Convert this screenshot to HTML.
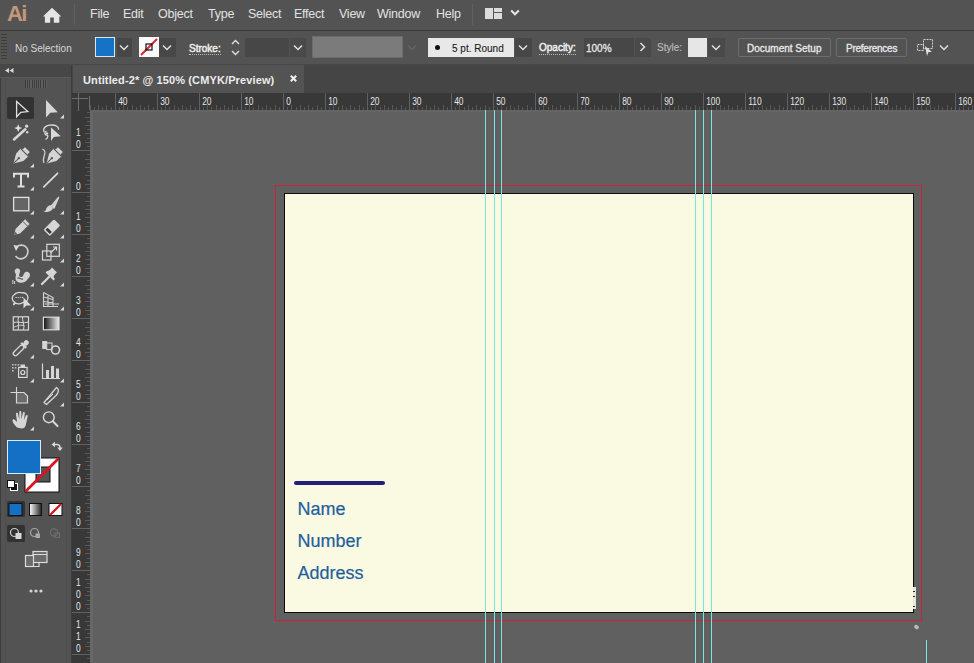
<!DOCTYPE html>
<html><head><meta charset="utf-8">
<style>
*{margin:0;padding:0;box-sizing:border-box}
html,body{width:974px;height:663px;overflow:hidden;background:#535353;font-family:"Liberation Sans",sans-serif}
.a{position:absolute}
.mt{position:absolute;top:7px;color:#e2e2e2;font-size:12.5px;letter-spacing:-0.25px;white-space:nowrap}
.lbl{position:absolute;color:#dcdcdc;font-size:10px;white-space:nowrap;-webkit-text-stroke:0.3px currentColor}
.chev{position:absolute;width:16px;height:18px}
</style></head><body>
<!-- menu bar -->
<div class="a" style="left:0;top:0;width:974px;height:30px;background:#535353"></div>
<div class="a" style="left:0;top:30px;width:974px;height:1px;background:#383838"></div>
<div class="a" style="left:7px;top:1px;font-size:22px;line-height:26px;color:#c29878;font-weight:bold;letter-spacing:-1.6px">Ai</div>
<svg class="a" style="left:42px;top:7px" width="20" height="16" viewBox="0 0 20 16"><path d="M10 0.8 L19.3 9.5 L17.3 9.5 L17.3 15.8 L11.8 15.8 L11.8 10.5 L8.2 10.5 L8.2 15.8 L2.9 15.8 L2.9 9.5 L0.9 9.5 Z" fill="#e6e6e6"/></svg>
<div class="a" style="left:74px;top:4px;width:1px;height:21px;background:#606060"></div>
<div class="mt" style="left:90px">File</div>
<div class="mt" style="left:123px">Edit</div>
<div class="mt" style="left:158px">Object</div>
<div class="mt" style="left:208px">Type</div>
<div class="mt" style="left:248px">Select</div>
<div class="mt" style="left:294px">Effect</div>
<div class="mt" style="left:339px">View</div>
<div class="mt" style="left:377px">Window</div>
<div class="mt" style="left:436px">Help</div>
<div class="a" style="left:472px;top:4px;width:1px;height:21px;background:#606060"></div>
<svg class="a" style="left:485px;top:8px" width="17" height="11" viewBox="0 0 17 11"><rect x="0" y="0" width="8" height="11" fill="#dcdcdc"/><rect x="9" y="0" width="8" height="4" fill="#dcdcdc"/><rect x="9" y="5" width="8" height="6" fill="#dcdcdc"/></svg>
<svg class="a" style="left:510px;top:9px" width="10" height="7" viewBox="0 0 10 7"><path d="M1.2 1.5 L5 5.3 L8.8 1.5" stroke="#e6e6e6" stroke-width="2" fill="none"/></svg>

<!-- control bar -->
<div class="a" style="left:0;top:31px;width:974px;height:33px;background:#535353"></div>
<div class="a" style="left:0;top:64px;width:974px;height:1px;background:#474747"></div>

<!-- control bar content -->
<div class="a" style="left:1px;top:34px;width:6px;height:27px;background-image:repeating-linear-gradient(#3d3d3d 0 1px,transparent 1px 3px)"></div>
<div class="lbl" style="left:15px;top:43px;font-size:10px;color:#d8d8d8;-webkit-text-stroke:0">No Selection</div>
<div class="a" style="left:95px;top:37px;width:20px;height:20px;background:#1572c4;border:1px solid #d8e6f2"></div>
<div class="a" style="left:117px;top:38px;width:15px;height:19px;background:#474747"></div>
<svg class="a" style="left:119px;top:44px" width="10" height="7" viewBox="0 0 10 7"><path d="M1 1.5 L5 5.5 L9 1.5" stroke="#e0e0e0" stroke-width="1.5" fill="none"/></svg>
<svg class="a" style="left:139px;top:37px" width="20" height="20" viewBox="0 0 20 20"><rect x="0" y="0" width="20" height="20" fill="#fafafa"/><path d="M2 18 L18 2" stroke="#e0202a" stroke-width="2"/><rect x="7" y="7" width="6" height="6" fill="none" stroke="#111" stroke-width="1.2"/></svg>
<div class="a" style="left:159px;top:38px;width:17px;height:19px;background:#474747"></div>
<svg class="a" style="left:162px;top:44px" width="10" height="7" viewBox="0 0 10 7"><path d="M1 1.5 L5 5.5 L9 1.5" stroke="#e0e0e0" stroke-width="1.5" fill="none"/></svg>
<div class="lbl" style="left:189px;top:43px;border-bottom:1px dotted #bbb;line-height:11px;color:#f0f0f0;-webkit-text-stroke:0.45px #f0f0f0">Stroke:</div>
<svg class="a" style="left:230px;top:38px" width="11" height="19" viewBox="0 0 11 19"><path d="M2 6 L5.5 2.5 L9 6 M2 13 L5.5 16.5 L9 13" stroke="#e0e0e0" stroke-width="1.4" fill="none"/></svg>
<div class="a" style="left:245px;top:38px;width:44px;height:19px;background:#474747"></div>
<div class="a" style="left:290px;top:38px;width:16px;height:19px;background:#4a4a4a"></div>
<svg class="a" style="left:293px;top:44px" width="10" height="7" viewBox="0 0 10 7"><path d="M1 1.5 L5 5.5 L9 1.5" stroke="#e0e0e0" stroke-width="1.5" fill="none"/></svg>
<div class="a" style="left:312px;top:36px;width:91px;height:22px;background:#7b7b7b;border:1px solid #6c6c6c"></div>
<svg class="a" style="left:407px;top:44px" width="10" height="7" viewBox="0 0 10 7"><path d="M1 1.5 L5 5.5 L9 1.5" stroke="#656565" stroke-width="1.5" fill="none"/></svg>
<div class="a" style="left:428px;top:38px;width:86px;height:19px;background:#e8e8e8"></div>
<div class="a" style="left:435px;top:45px;width:5px;height:5px;border-radius:50%;background:#111"></div>
<div class="lbl" style="left:452px;top:43px;color:#1a1a1a;font-size:10px;-webkit-text-stroke:0.1px #1a1a1a">5 pt. Round</div>
<div class="a" style="left:515px;top:38px;width:17px;height:19px;background:#474747"></div>
<svg class="a" style="left:518px;top:44px" width="10" height="7" viewBox="0 0 10 7"><path d="M1 1.5 L5 5.5 L9 1.5" stroke="#e0e0e0" stroke-width="1.5" fill="none"/></svg>
<div class="lbl" style="left:539px;top:42px;border-bottom:1px dotted #bbb;line-height:12px;color:#f0f0f0;-webkit-text-stroke:0.45px #f0f0f0">Opacity:</div>
<div class="a" style="left:584px;top:38px;width:50px;height:19px;background:#474747"></div>
<div class="lbl" style="left:586px;top:43px;color:#e6e6e6">100%</div>
<div class="a" style="left:635px;top:38px;width:16px;height:19px;background:#4a4a4a"></div>
<svg class="a" style="left:639px;top:42px" width="7" height="10" viewBox="0 0 7 10"><path d="M1.5 1 L5.5 5 L1.5 9" stroke="#e0e0e0" stroke-width="1.5" fill="none"/></svg>
<div class="lbl" style="left:657px;top:42px;color:#b8b8b8;-webkit-text-stroke:0.2px #b8b8b8">Style:</div>
<div class="a" style="left:688px;top:38px;width:19px;height:19px;background:#e6e6e6"></div>
<div class="a" style="left:708px;top:38px;width:17px;height:19px;background:#4a4a4a"></div>
<svg class="a" style="left:711px;top:44px" width="10" height="7" viewBox="0 0 10 7"><path d="M1 1.5 L5 5.5 L9 1.5" stroke="#e0e0e0" stroke-width="1.5" fill="none"/></svg>
<div class="a" style="left:738px;top:38px;width:93px;height:19px;border:1px solid #6e6e6e;border-radius:2px"></div>
<div class="lbl" style="left:747px;top:43px;color:#eaeaea">Document Setup</div>
<div class="a" style="left:836px;top:38px;width:71px;height:19px;border:1px solid #6e6e6e;border-radius:2px"></div>
<div class="lbl" style="left:846px;top:43px;color:#eaeaea;letter-spacing:-0.25px">Preferences</div>
<svg class="a" style="left:915px;top:37px" width="22" height="20" viewBox="0 0 22 20"><rect x="8.5" y="2.5" width="9" height="9" fill="none" stroke="#d0d0d0" stroke-dasharray="2 1"/><rect x="2.5" y="7.5" width="6" height="6" fill="none" stroke="#d0d0d0" stroke-dasharray="2 1"/><path d="M10 9 L17 15 L13.5 15 L12 19 Z" fill="#e0e0e0"/></svg>
<svg class="a" style="left:939px;top:44px" width="10" height="7" viewBox="0 0 10 7"><path d="M1 1.5 L5 5.5 L9 1.5" stroke="#e0e0e0" stroke-width="1.5" fill="none"/></svg>

<!-- tab bar -->
<div class="a" style="left:72px;top:65px;width:902px;height:28px;background:#454545"></div>
<div class="a" style="left:73px;top:65px;width:231px;height:28px;background:#535353"></div>
<div class="a" style="left:83px;top:73px;color:#ececec;font-size:11px;font-weight:bold;letter-spacing:0.12px;white-space:nowrap;top:74px">Untitled-2* @ 150% (CMYK/Preview)</div>
<svg class="a" style="left:289px;top:74px" width="9" height="9" viewBox="0 0 9 9"><path d="M1.8 1.8 L7.2 7.2 M7.2 1.8 L1.8 7.2" stroke="#f0f0f0" stroke-width="2"/></svg>

<!-- rulers -->
<svg class="a" style="left:72px;top:93px" width="902" height="570" viewBox="72 93 902 570">
<rect x="72" y="93" width="902" height="17" fill="#383838"/>
<rect x="72" y="93" width="18" height="570" fill="#383838"/>
<path d="M115.5 93V110 M157.5 93V110 M199.5 93V110 M241.5 93V110 M283.5 93V110 M325.5 93V110 M367.5 93V110 M409.5 93V110 M451.5 93V110 M493.5 93V110 M535.5 93V110 M577.5 93V110 M619.5 93V110 M661.5 93V110 M703.5 93V110 M745.5 93V110 M787.5 93V110 M829.5 93V110 M871.5 93V110 M913.5 93V110 M955.5 93V110 M997.5 93V110 M72 150.5H90 M72 192.5H90 M72 234.5H90 M72 276.5H90 M72 318.5H90 M72 360.5H90 M72 402.5H90 M72 444.5H90 M72 486.5H90 M72 528.5H90 M72 570.5H90 M72 612.5H90 M72 654.5H90" stroke="#626262" stroke-width="1" fill="none"/>
<path d="M90.5 105V110 M94.5 107V110 M98.5 105V110 M102.5 107V110 M106.5 105V110 M111.5 107V110 M119.5 107V110 M123.5 105V110 M127.5 107V110 M132.5 105V110 M136.5 107V110 M140.5 105V110 M144.5 107V110 M148.5 105V110 M153.5 107V110 M161.5 107V110 M165.5 105V110 M169.5 107V110 M174.5 105V110 M178.5 107V110 M182.5 105V110 M186.5 107V110 M190.5 105V110 M195.5 107V110 M203.5 107V110 M207.5 105V110 M211.5 107V110 M216.5 105V110 M220.5 107V110 M224.5 105V110 M228.5 107V110 M232.5 105V110 M237.5 107V110 M245.5 107V110 M249.5 105V110 M253.5 107V110 M258.5 105V110 M262.5 107V110 M266.5 105V110 M270.5 107V110 M275.5 105V110 M279.5 107V110 M287.5 107V110 M291.5 105V110 M296.5 107V110 M300.5 105V110 M304.5 107V110 M308.5 105V110 M312.5 107V110 M317.5 105V110 M321.5 107V110 M329.5 107V110 M333.5 105V110 M338.5 107V110 M342.5 105V110 M346.5 107V110 M350.5 105V110 M354.5 107V110 M359.5 105V110 M363.5 107V110 M371.5 107V110 M375.5 105V110 M380.5 107V110 M384.5 105V110 M388.5 107V110 M392.5 105V110 M396.5 107V110 M401.5 105V110 M405.5 107V110 M413.5 107V110 M417.5 105V110 M422.5 107V110 M426.5 105V110 M430.5 107V110 M434.5 105V110 M438.5 107V110 M443.5 105V110 M447.5 107V110 M455.5 107V110 M459.5 105V110 M464.5 107V110 M468.5 105V110 M472.5 107V110 M476.5 105V110 M480.5 107V110 M485.5 105V110 M489.5 107V110 M497.5 107V110 M501.5 105V110 M506.5 107V110 M510.5 105V110 M514.5 107V110 M518.5 105V110 M522.5 107V110 M527.5 105V110 M531.5 107V110 M539.5 107V110 M543.5 105V110 M548.5 107V110 M552.5 105V110 M556.5 107V110 M560.5 105V110 M564.5 107V110 M569.5 105V110 M573.5 107V110 M581.5 107V110 M585.5 105V110 M590.5 107V110 M594.5 105V110 M598.5 107V110 M602.5 105V110 M606.5 107V110 M611.5 105V110 M615.5 107V110 M623.5 107V110 M627.5 105V110 M632.5 107V110 M636.5 105V110 M640.5 107V110 M644.5 105V110 M648.5 107V110 M653.5 105V110 M657.5 107V110 M665.5 107V110 M669.5 105V110 M674.5 107V110 M678.5 105V110 M682.5 107V110 M686.5 105V110 M690.5 107V110 M695.5 105V110 M699.5 107V110 M707.5 107V110 M711.5 105V110 M716.5 107V110 M720.5 105V110 M724.5 107V110 M728.5 105V110 M732.5 107V110 M737.5 105V110 M741.5 107V110 M749.5 107V110 M753.5 105V110 M758.5 107V110 M762.5 105V110 M766.5 107V110 M770.5 105V110 M774.5 107V110 M779.5 105V110 M783.5 107V110 M791.5 107V110 M795.5 105V110 M800.5 107V110 M804.5 105V110 M808.5 107V110 M812.5 105V110 M816.5 107V110 M821.5 105V110 M825.5 107V110 M833.5 107V110 M837.5 105V110 M842.5 107V110 M846.5 105V110 M850.5 107V110 M854.5 105V110 M858.5 107V110 M863.5 105V110 M867.5 107V110 M875.5 107V110 M879.5 105V110 M884.5 107V110 M888.5 105V110 M892.5 107V110 M896.5 105V110 M900.5 107V110 M905.5 105V110 M909.5 107V110 M917.5 107V110 M921.5 105V110 M926.5 107V110 M930.5 105V110 M934.5 107V110 M938.5 105V110 M942.5 107V110 M947.5 105V110 M951.5 107V110 M959.5 107V110 M963.5 105V110 M968.5 107V110 M972.5 105V110 M87 112.5H90 M85 117.5H90 M87 121.5H90 M85 125.5H90 M87 129.5H90 M85 133.5H90 M87 138.5H90 M85 142.5H90 M87 146.5H90 M87 154.5H90 M85 159.5H90 M87 163.5H90 M85 167.5H90 M87 171.5H90 M85 175.5H90 M87 180.5H90 M85 184.5H90 M87 188.5H90 M87 196.5H90 M85 201.5H90 M87 205.5H90 M85 209.5H90 M87 213.5H90 M85 217.5H90 M87 222.5H90 M85 226.5H90 M87 230.5H90 M87 238.5H90 M85 243.5H90 M87 247.5H90 M85 251.5H90 M87 255.5H90 M85 259.5H90 M87 264.5H90 M85 268.5H90 M87 272.5H90 M87 280.5H90 M85 285.5H90 M87 289.5H90 M85 293.5H90 M87 297.5H90 M85 301.5H90 M87 306.5H90 M85 310.5H90 M87 314.5H90 M87 322.5H90 M85 327.5H90 M87 331.5H90 M85 335.5H90 M87 339.5H90 M85 343.5H90 M87 348.5H90 M85 352.5H90 M87 356.5H90 M87 364.5H90 M85 369.5H90 M87 373.5H90 M85 377.5H90 M87 381.5H90 M85 385.5H90 M87 390.5H90 M85 394.5H90 M87 398.5H90 M87 406.5H90 M85 411.5H90 M87 415.5H90 M85 419.5H90 M87 423.5H90 M85 427.5H90 M87 432.5H90 M85 436.5H90 M87 440.5H90 M87 448.5H90 M85 453.5H90 M87 457.5H90 M85 461.5H90 M87 465.5H90 M85 469.5H90 M87 474.5H90 M85 478.5H90 M87 482.5H90 M87 490.5H90 M85 495.5H90 M87 499.5H90 M85 503.5H90 M87 507.5H90 M85 511.5H90 M87 516.5H90 M85 520.5H90 M87 524.5H90 M87 532.5H90 M85 537.5H90 M87 541.5H90 M85 545.5H90 M87 549.5H90 M85 553.5H90 M87 558.5H90 M85 562.5H90 M87 566.5H90 M87 574.5H90 M85 579.5H90 M87 583.5H90 M85 587.5H90 M87 591.5H90 M85 595.5H90 M87 600.5H90 M85 604.5H90 M87 608.5H90 M87 616.5H90 M85 621.5H90 M87 625.5H90 M85 629.5H90 M87 633.5H90 M85 637.5H90 M87 642.5H90 M85 646.5H90 M87 650.5H90 M87 658.5H90" stroke="#585858" stroke-width="1" fill="none"/>
<rect x="72" y="93" width="18" height="17" fill="#383838"/><path d="M72 98.5H88 M78.5 93V111 M89.5 96V110" stroke="#6e6e6e" stroke-width="1"/>
<g fill="#e6e6e6" font-family="Liberation Sans" font-size="10.5px"><text transform="translate(118.2 105) scale(0.8 1)">40</text><text transform="translate(160.2 105) scale(0.8 1)">30</text><text transform="translate(202.2 105) scale(0.8 1)">20</text><text transform="translate(244.2 105) scale(0.8 1)">10</text><text transform="translate(286.2 105) scale(0.8 1)">0</text><text transform="translate(328.2 105) scale(0.8 1)">10</text><text transform="translate(370.2 105) scale(0.8 1)">20</text><text transform="translate(412.2 105) scale(0.8 1)">30</text><text transform="translate(454.2 105) scale(0.8 1)">40</text><text transform="translate(496.2 105) scale(0.8 1)">50</text><text transform="translate(538.2 105) scale(0.8 1)">60</text><text transform="translate(580.2 105) scale(0.8 1)">70</text><text transform="translate(622.2 105) scale(0.8 1)">80</text><text transform="translate(664.2 105) scale(0.8 1)">90</text><text transform="translate(706.2 105) scale(0.8 1)">100</text><text transform="translate(748.2 105) scale(0.8 1)">110</text><text transform="translate(790.2 105) scale(0.8 1)">120</text><text transform="translate(832.2 105) scale(0.8 1)">130</text><text transform="translate(874.2 105) scale(0.8 1)">140</text><text transform="translate(916.2 105) scale(0.8 1)">150</text><text transform="translate(958.2 105) scale(0.8 1)">160</text><text transform="translate(1000.2 105) scale(0.8 1)">170</text><text transform="translate(76 135.5) scale(0.8 1)">1</text><text transform="translate(76 147.5) scale(0.8 1)">0</text><text transform="translate(76 189.5) scale(0.8 1)">0</text><text transform="translate(76 219.5) scale(0.8 1)">1</text><text transform="translate(76 231.5) scale(0.8 1)">0</text><text transform="translate(76 261.5) scale(0.8 1)">2</text><text transform="translate(76 273.5) scale(0.8 1)">0</text><text transform="translate(76 303.5) scale(0.8 1)">3</text><text transform="translate(76 315.5) scale(0.8 1)">0</text><text transform="translate(76 345.5) scale(0.8 1)">4</text><text transform="translate(76 357.5) scale(0.8 1)">0</text><text transform="translate(76 387.5) scale(0.8 1)">5</text><text transform="translate(76 399.5) scale(0.8 1)">0</text><text transform="translate(76 429.5) scale(0.8 1)">6</text><text transform="translate(76 441.5) scale(0.8 1)">0</text><text transform="translate(76 471.5) scale(0.8 1)">7</text><text transform="translate(76 483.5) scale(0.8 1)">0</text><text transform="translate(76 513.5) scale(0.8 1)">8</text><text transform="translate(76 525.5) scale(0.8 1)">0</text><text transform="translate(76 555.5) scale(0.8 1)">9</text><text transform="translate(76 567.5) scale(0.8 1)">0</text><text transform="translate(76 585.5) scale(0.8 1)">1</text><text transform="translate(76 597.5) scale(0.8 1)">0</text><text transform="translate(76 609.5) scale(0.8 1)">0</text><text transform="translate(76 627.5) scale(0.8 1)">1</text><text transform="translate(76 639.5) scale(0.8 1)">1</text><text transform="translate(76 651.5) scale(0.8 1)">0</text></g>
</svg>
<div class="a" style="left:90px;top:110px;width:884px;height:553px;background:#606060"></div>
<div class="a" style="left:90px;top:110px;width:3px;height:553px;background:#676767"></div>
<div class="a" style="left:90px;top:110px;width:884px;height:2px;background:#646464"></div>
<!-- left tool panel -->
<div class="a" style="left:0;top:65px;width:72px;height:598px;background:#535353"></div>
<div class="a" style="left:0;top:65px;width:71px;height:12px;background:#474747"></div>
<div class="a" style="left:71px;top:65px;width:1px;height:598px;background:#3b3b3b"></div>
<div class="a" style="left:25px;top:80px;width:22px;height:8px;background-image:repeating-linear-gradient(90deg,#3c3c3c 0 1px,#5e5e5e 1px 2.2px)"></div>
<div class="a" style="left:0;top:77px;width:1px;height:586px;background:#3c3c3c"></div>
<div class="a" style="left:5px;top:78px;width:1px;height:585px;background:#4d4d4d"></div>
<div class="a" style="left:66px;top:78px;width:1px;height:585px;background:#4d4d4d"></div>
<div class="a" style="left:0;top:77px;width:71px;height:1px;background:#5a5a5a"></div>
<svg class="a" style="left:5px;top:68px" width="9" height="5" viewBox="0 0 9 5"><path d="M4 0L0 2.5L4 5Z M8.5 0L4.5 2.5L8.5 5Z" fill="#d8d8d8"/></svg>
<svg class="a" style="left:0;top:0" width="72" height="663" viewBox="0 0 72 663">
<defs>
<linearGradient id="gr1" x1="0" x2="1" y1="0" y2="0"><stop offset="0" stop-color="#111"/><stop offset="1" stop-color="#eee"/></linearGradient>
<linearGradient id="gr2" x1="0" x2="1" y1="0" y2="0"><stop offset="0" stop-color="#fff"/><stop offset="1" stop-color="#222"/></linearGradient>
</defs>
<g fill="#d8d8d8" stroke="none">
<!-- corner triangles col1 -->
<path d="M34 163.5v4h-4z M34 186.5v4h-4z M34 210.5v4h-4z M34 234.5v4h-4z M34 258.5v4h-4z M34 282.5v4h-4z M34 306.5v4h-4z M34 354.5v4h-4z M34 378.5v4h-4z M34 426.5v4h-4z"/>
<!-- col2 -->
<path d="M64 114.5v4h-4z M64 186.5v4h-4z M64 210.5v4h-4z M64 234.5v4h-4z M64 258.5v4h-4z M64 282.5v4h-4z M64 306.5v4h-4z M64 378.5v4h-4z M64 402.5v4h-4z"/>
</g>
<!-- selection tool selected -->
<rect x="7" y="97" width="27" height="22" rx="2.5" fill="#323232"/>
<path d="M16.6 101.5 L16.6 116.8 L20.8 112.3 L27.8 111.6 Z" fill="none" stroke="#dedede" stroke-width="1.3" stroke-linejoin="miter"/>
<!-- direct selection -->
<path d="M46 100 L46 117.5 L50.3 112.8 L57.8 112.2 Z" fill="#d6d6d6"/>
<!-- magic wand -->
<path d="M14 139.5 L25.3 129.3" stroke="#d8d8d8" stroke-width="2.5" stroke-linecap="round"/>
<path d="M18.2 124.2 L19.4 126.9 L22.2 128.1 L19.4 129.3 L18.2 132 L17 129.3 L14.2 128.1 L17 126.9 Z" fill="#dcdcdc"/>
<circle cx="26.6" cy="126.2" r="1.6" fill="#d8d8d8"/><circle cx="27.2" cy="132.3" r="1.2" fill="#d8d8d8"/>
<!-- lasso -->
<path d="M44 132 C42.5 127 47 125 51.5 125 C56 125 59 127 58.6 129.6" fill="none" stroke="#d8d8d8" stroke-width="1.3"/>
<path d="M46.5 131.2 C44 132 44.5 135 46.8 135.2 C48.5 135.2 48 138 45.5 139.5" fill="none" stroke="#d8d8d8" stroke-width="1.3"/>
<circle cx="47" cy="133.4" r="1.2" fill="#d8d8d8"/>
<path d="M51 127.6 L51 141 L53.8 137 L60.8 136.3 Z" fill="#dadada"/>
<!-- pen -->
<g transform="translate(20.5,156.5) rotate(45) scale(1.15)"><path d="M-3 -8.5 L3 -8.5 L3 -5.5 L4.8 -5 L4.5 1 L0 8.5 L-4.5 1 L-4.8 -5 L-3 -5.5 Z" fill="#d4d4d4"/><path d="M-4.8 -5 L4.8 -5" stroke="#535353" stroke-width="0.9"/><path d="M0 8 L0 2" stroke="#535353" stroke-width="0.9"/><circle cx="0" cy="2" r="1" fill="#535353"/></g>
<!-- curvature pen -->
<g transform="translate(53.5,156.5) rotate(45) scale(1.15)"><path d="M-3 -8.5 L3 -8.5 L3 -5.5 L4.8 -5 L4.5 1 L0 8.5 L-4.5 1 L-4.8 -5 L-3 -5.5 Z" fill="#d4d4d4"/><path d="M-4.8 -5 L4.8 -5" stroke="#535353" stroke-width="0.9"/><path d="M0 8 L0 2" stroke="#535353" stroke-width="0.9"/><circle cx="0" cy="2" r="1" fill="#535353"/></g>
<path d="M42.3 149 C45 150 45.5 152 44.5 155 C43.5 158 42.5 160 44 163" fill="none" stroke="#d0d0d0" stroke-width="1.2"/>
<!-- type -->
<path d="M14 177.5 L14 173.8 L28 173.8 L28 177.5 M21 173.8 L21 186.5 M17.5 186.5 L24.5 186.5" fill="none" stroke="#dedede" stroke-width="2"/>
<!-- line -->
<path d="M43.8 186.8 L57.5 173.3" stroke="#d8d8d8" stroke-width="1.8" stroke-linecap="round"/>
<!-- rect -->
<rect x="13.6" y="197.4" width="15.2" height="13.4" fill="#656565" stroke="#e2e2e2" stroke-width="1.3"/>
<!-- paintbrush -->
<path d="M58.5 197.5 L51.5 206 L54 208 Z" fill="#d4d4d4" stroke="#d4d4d4" stroke-width="1.5" stroke-linejoin="round"/>
<path d="M50.5 205 C48 205.5 46.5 207.5 46 209.5 C45.5 211 44.5 211.5 43.5 212 C47.5 212.5 51 211.5 53 208.5 Z" fill="#d4d4d4"/>
<!-- pencil -->
<g transform="translate(21,228) rotate(45)"><path d="M-3.2 -9 L3.2 -9 L3.2 4.5 L0 9.5 L-3.2 4.5 Z" fill="#d4d4d4"/><path d="M-3.2 -6 L3.2 -6" stroke="#535353" stroke-width="0.9"/><path d="M-1.3 6.8 L1.3 6.8 L0 9.5 Z" fill="#535353"/></g>
<!-- eraser -->
<g transform="translate(51.5,228) rotate(45)"><rect x="-4.5" y="-8" width="9" height="15" rx="1.5" fill="#d6d6d6"/><rect x="-3" y="2.5" width="6" height="3" fill="#3c3c3c"/></g>
<!-- rotate -->
<path d="M17 246.5 C19.5 244.5 24 244.5 26.5 247.5 C29 250.5 28 256 24 258 C21 259.5 17.5 258.5 15.5 256" fill="none" stroke="#cfcfcf" stroke-width="1.6"/>
<path d="M13.5 245 L19 246 L16 251 Z" fill="#dadada"/>
<!-- scale -->
<rect x="46.8" y="244.3" width="12.5" height="12" fill="none" stroke="#d8d8d8" stroke-width="1.2"/>
<rect x="42.5" y="251" width="8.5" height="9" fill="none" stroke="#d8d8d8" stroke-width="1.2"/>
<path d="M50.5 253 L56 247.5 M53 247 L56.5 247 L56.5 250.5" fill="none" stroke="#d8d8d8" stroke-width="1.2"/>
<!-- warp -->
<path d="M15.5 273.5 C13.5 270.5 15.5 268 18 268.5 C20.5 269 20.5 271.5 19.5 273.5 C18.5 275.5 19.5 277.5 21.5 277 C23.5 276.5 23.5 273 25.5 272 C27.5 271 30 272.5 30 275 C30 277.5 28 278 27 280 C25.5 282.5 22 283 19 282.5 C16.5 282 15.5 280 15.5 278 C15.5 276 16.5 275 15.5 273.5 Z" fill="#d2d2d2"/>
<path d="M17.5 278.5 C18.5 276.5 21 280 23 279" fill="none" stroke="#535353" stroke-width="1.1"/>
<path d="M12.8 280 L12.8 284 M14.6 281 L14.6 284" stroke="#cfcfcf" stroke-width="1"/>
<!-- puppet warp pin -->
<path d="M47.5 271 C49.5 270.5 51 269 52 267.5 L57 272.5 C55.5 273.5 54 275 53.5 277 L55 279 L53.5 280.5 L45.5 272.5 L47 271 Z" fill="#d6d6d6"/>
<path d="M49 277 L42 284" stroke="#d6d6d6" stroke-width="2.2" stroke-linecap="round"/>
<!-- shape builder -->
<path d="M14.5 302 C11.5 300.5 11.5 296 14.5 294.5 C16 292.5 19.5 291.8 22 292.8 C25.5 292.5 28 294.5 27.8 297.5 C28.5 300 26 302.5 23 302.5 C21 304 17.5 304.5 15.5 303 L13.5 305 Z" fill="none" stroke="#d8d8d8" stroke-width="1.3"/>
<path d="M15.5 297.5 L23.5 297.5" stroke="#d8d8d8" stroke-width="1.2" stroke-dasharray="1.2 1"/>
<path d="M23.5 297.5 L23.5 308.5 L26.3 305.5 L31.2 305.5 Z" fill="#dadada"/>
<!-- perspective grid -->
<path d="M43.5 292.5 L43.5 306.5 L58 306.5 M43.5 292.5 L53 297.5 L53 306.5 M43.5 297 L53 299.5 M43.5 301.5 L53 302.5 M48 294.5 L48 306.5 M44.5 304 L59 304" fill="none" stroke="#d4d4d4" stroke-width="1.1"/>
<!-- mesh -->
<rect x="13.3" y="316.8" width="15.2" height="13.2" fill="none" stroke="#d8d8d8" stroke-width="1.2"/>
<path d="M18.5 317 C17 321 20 325 18 330 M13.5 322.5 C17 321 23 324 28.5 322 M22.5 317 C22 320 25 326 23.5 330 M14 327 C18 326 21 324 24.5 326" fill="none" stroke="#d8d8d8" stroke-width="1"/>
<!-- gradient -->
<rect x="43.4" y="317.2" width="15.6" height="12.6" fill="url(#gr1)" stroke="#dcdcdc" stroke-width="1.2"/>
<!-- eyedropper -->
<g transform="translate(21,348) rotate(45)"><rect x="-2.2" y="-3" width="4.4" height="13" rx="2.2" fill="none" stroke="#d6d6d6" stroke-width="1.3"/><rect x="-3.5" y="-5" width="7" height="2.5" fill="#d6d6d6"/><rect x="-2.5" y="-10" width="5" height="5.5" rx="2.3" fill="#d6d6d6"/></g>
<!-- blend -->
<rect x="42.2" y="341" width="5" height="8" fill="#d6d6d6"/>
<rect x="46.5" y="343" width="5.5" height="6.5" fill="none" stroke="#d0d0d0" stroke-width="1.1"/>
<circle cx="55.5" cy="350" r="4" fill="none" stroke="#d6d6d6" stroke-width="1.6"/>
<!-- symbol sprayer -->
<g fill="#bdbdbd"><rect x="12" y="364" width="1.6" height="1.6"/><rect x="14.8" y="364" width="1.6" height="1.6"/><rect x="17.6" y="364" width="1.6" height="1.6"/><rect x="12" y="367" width="1.6" height="1.6"/><rect x="14.8" y="367" width="1.6" height="1.6"/><rect x="12" y="370" width="1.6" height="1.6"/></g>
<rect x="18.6" y="367.4" width="8.5" height="10" fill="none" stroke="#d8d8d8" stroke-width="1.2"/>
<rect x="20.5" y="364.5" width="4.5" height="2.5" fill="#d8d8d8"/>
<circle cx="22.8" cy="372.5" r="2" fill="none" stroke="#d8d8d8" stroke-width="1.2"/>
<!-- graph -->
<path d="M42.5 363.5 L42.5 378.5 L60 378.5" fill="none" stroke="#d6d6d6" stroke-width="1.2"/>
<rect x="46" y="370" width="3" height="8" fill="#d6d6d6"/><rect x="51" y="366" width="3" height="12" fill="#d6d6d6"/><rect x="56" y="368.5" width="3" height="10" fill="#d6d6d6"/>
<!-- artboard -->
<path d="M16.5 387 L16.5 392.5 M10.5 392.5 L16.5 392.5" stroke="#d6d6d6" stroke-width="1.1"/>
<path d="M16.5 392.5 L24 392.5 L27.5 396 L27.5 403 L16.5 403 Z" fill="#6b6b6b" stroke="#d8d8d8" stroke-width="1.2"/>
<!-- slice/knife -->
<path d="M56.5 387.5 C59.5 389 58.5 393 56 395.5 L46.5 404.5 L44 402.5 Z" fill="none" stroke="#d6d6d6" stroke-width="1.3" stroke-linejoin="round"/>
<path d="M47 400 L53 394" stroke="#d6d6d6" stroke-width="1"/>
<!-- hand -->
<path d="M17 427.5 C14.5 425 12.5 422 12.5 420.5 C12.5 419 14 419 15 420 L17 422 L16 414 C15.8 412.5 17.8 412.3 18 414 L19.3 419.5 L19.3 412.3 C19.3 410.7 21.3 410.7 21.3 412.3 L21.5 419.5 L22.8 413 C23.1 411.5 25 411.8 24.8 413.3 L24 420 L25.8 415.8 C26.3 414.5 28 415 27.7 416.3 L26 424 C25.5 427 24 428.5 21.5 428.5 Z" fill="#d6d6d6"/>
<!-- zoom -->
<circle cx="48.8" cy="417.3" r="5.4" fill="none" stroke="#d8d8d8" stroke-width="1.4"/>
<path d="M52.8 421.3 L57.5 426" stroke="#d8d8d8" stroke-width="2" stroke-linecap="round"/>
<!-- stroke swatch -->
<rect x="24.5" y="457.5" width="35" height="35" fill="#111"/>
<rect x="25.5" y="458.5" width="33" height="33" fill="#fff"/>
<rect x="35.5" y="466.5" width="15" height="16" fill="#111"/>
<rect x="36.5" y="467.5" width="13" height="14" fill="#535353"/>
<path d="M25.5 491.5 L58.5 458.5" stroke="#d8141e" stroke-width="2.6"/>
<!-- fill swatch -->
<rect x="7" y="440" width="34" height="34" fill="#d6ecf8"/>
<rect x="8" y="441" width="32" height="32" fill="#1470c4"/>
<!-- swap -->
<path d="M54.5 444.5 L57 444.5 C59 444.5 60 445.5 60 447.5 L60 448.5" fill="none" stroke="#d8d8d8" stroke-width="1.4"/>
<path d="M51.5 444.5 L55 441.8 L55 447.2 Z M57.3 447.5 L62.7 447.5 L60 451 Z" fill="#d8d8d8"/>
<!-- default fill/stroke -->
<rect x="10.5" y="483.5" width="7" height="7" fill="#111" stroke="#fff" stroke-width="1"/>
<rect x="7.5" y="480.5" width="7" height="7" fill="#fff" stroke="#111" stroke-width="1"/>
<!-- mode buttons -->
<rect x="7" y="501" width="18" height="16" rx="1.5" fill="#323232"/>
<rect x="9" y="503.5" width="13" height="12" fill="#1470c4" stroke="#111" stroke-width="1"/>
<rect x="29.5" y="503.5" width="12" height="12" fill="url(#gr2)" stroke="#111" stroke-width="1"/>
<rect x="49" y="503.5" width="13" height="12" fill="#fff" stroke="#111" stroke-width="1"/>
<path d="M50 515 L61 504" stroke="#d8141e" stroke-width="2.2"/>
<!-- draw modes -->
<rect x="7" y="525" width="18" height="17" rx="1.5" fill="#323232"/>
<circle cx="14.5" cy="532.5" r="4" fill="none" stroke="#cfcfcf" stroke-width="1.2"/>
<rect x="15.5" y="533" width="6" height="6" fill="#d8d8d8"/>
<circle cx="34.5" cy="532.5" r="4" fill="none" stroke="#a8a8a8" stroke-width="1.2"/>
<rect x="35.5" y="533.5" width="4.5" height="4.5" fill="#a8a8a8"/>
<circle cx="54" cy="532.5" r="3.6" fill="none" stroke="#6e6e6e" stroke-width="1.1"/>
<rect x="55" y="533" width="4.5" height="4.5" fill="none" stroke="#6e6e6e" stroke-width="1"/>
<!-- screen mode -->
<rect x="33" y="551.5" width="14" height="11" fill="#6a6a6a" stroke="#dcdcdc" stroke-width="1.2"/>
<path d="M33 554.5 L47 554.5" stroke="#dcdcdc" stroke-width="1"/>
<rect x="25.5" y="555.5" width="8" height="11" fill="#6a6a6a" stroke="#dcdcdc" stroke-width="1.2"/>
<path d="M33.5 566.5 L39 566.5 L39 562.5" fill="none" stroke="#dcdcdc" stroke-width="1.2"/>
<!-- more -->
<circle cx="31" cy="591" r="1.6" fill="#d4d4d4"/><circle cx="36" cy="591" r="1.6" fill="#d4d4d4"/><circle cx="41" cy="591" r="1.6" fill="#d4d4d4"/>
</svg>

<!-- artboard -->
<div class="a" style="left:275px;top:185px;width:647px;height:436px;border:1px solid #d0203f"></div>
<div class="a" style="left:284px;top:193px;width:630px;height:420px;border:1px solid #0a0a0a;background:#fafae2"></div>
<div class="a" style="left:294px;top:481px;width:91px;height:4px;border-radius:2px;background:#22207c"></div>
<div class="a" style="left:297.5px;top:498px;color:#1f5e9e;-webkit-text-stroke:0.2px #1f5e9e;font-size:18px;line-height:22px">Name</div>
<div class="a" style="left:297.5px;top:530px;color:#1f5e9e;-webkit-text-stroke:0.2px #1f5e9e;font-size:18px;line-height:22px">Number</div>
<div class="a" style="left:297.5px;top:562px;color:#1f5e9e;-webkit-text-stroke:0.2px #1f5e9e;font-size:18px;line-height:22px">Address</div>
<!-- guides -->
<div class="a" style="left:485px;top:110px;width:1px;height:553px;background:#78e6dc"></div>
<div class="a" style="left:494px;top:110px;width:1px;height:553px;background:#78e6dc"></div>
<div class="a" style="left:501px;top:110px;width:1px;height:553px;background:#78e6dc"></div>
<div class="a" style="left:695px;top:110px;width:1px;height:553px;background:#78e6dc"></div>
<div class="a" style="left:703px;top:110px;width:1px;height:553px;background:#78e6dc"></div>
<div class="a" style="left:711px;top:110px;width:1px;height:553px;background:#78e6dc"></div>
<div class="a" style="left:926px;top:640px;width:1px;height:23px;background:#78e6dc"></div>
<div class="a" style="left:914px;top:625px;width:5px;height:4px;border-radius:50%;background:#b8b8b8;transform:rotate(30deg)"></div>
<div class="a" style="left:913px;top:587px;width:3px;height:22px;background:#e6e6dc"></div><div class="a" style="left:913px;top:591px;width:2px;height:1px;background:#222"></div><div class="a" style="left:913px;top:596px;width:2px;height:1px;background:#222"></div><div class="a" style="left:913px;top:606px;width:2px;height:1px;background:#222"></div>
</body></html>
